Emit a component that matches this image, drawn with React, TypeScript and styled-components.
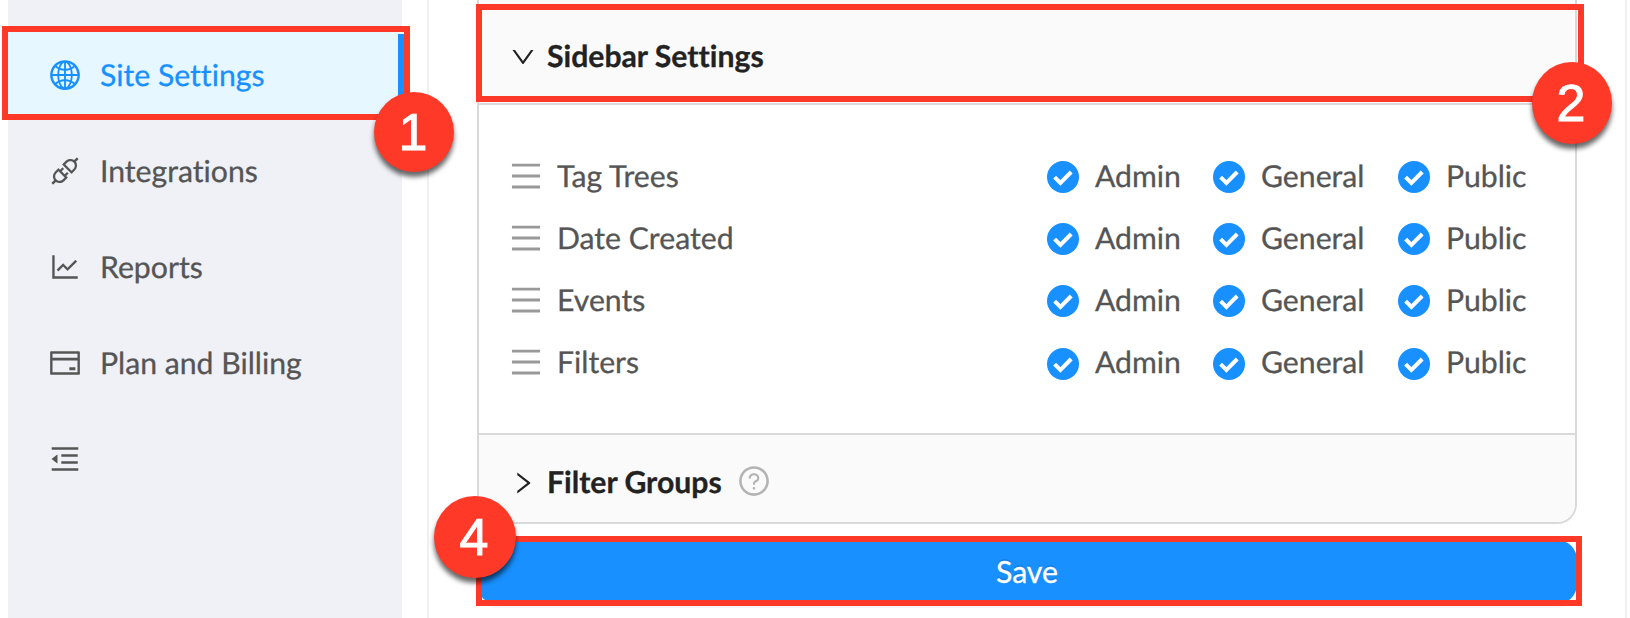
import React from "react";
import styled, { createGlobalStyle } from "styled-components";
import {
  AiOutlineGlobal,
  AiOutlineApi,
  AiOutlineLineChart,
  AiOutlineCreditCard,
  AiOutlineMenuFold,
  AiOutlineMenu,
  AiOutlineDown,
  AiOutlineRight,
  AiOutlineQuestionCircle,
} from "react-icons/ai";

const GlobalStyle = createGlobalStyle`
  * { box-sizing: border-box; }
  body {
    margin: 0;
    background: #fff;
    font-family: Lato, "Liberation Sans", sans-serif;
    font-size: 30.2px;
    font-variant-ligatures: none;
    text-rendering: geometricPrecision;
    -webkit-text-stroke: 0.3px currentColor;
    overflow: hidden;
  }
`;

const Page = styled.div`
  position: relative;
  display: flex;
  width: 1630px;
  height: 618px;
  padding-left: 8px;
  overflow: hidden;
`;

const Sidebar = styled.nav`
  width: 394px;
  height: 100%;
  padding-top: 32px;
  display: flex;
  flex-direction: column;
  gap: 14px;
  background: #f0f1f6;
`;

const NavItem = styled.a<{ $active?: boolean }>`
  display: flex;
  align-items: center;
  gap: 18px;
  height: 82px;
  padding: 4px 0 0 40px;
  line-height: 40px;
  color: ${(p) => (p.$active ? "#1890ff" : "#555")};
  background: ${(p) => (p.$active ? "#e6f7ff" : "transparent")};
  svg { flex: none; width: 34px; height: 34px; }
`;

const Label = styled.span<{ $lift: number }>`
  margin-bottom: ${(p) => p.$lift * 2}px;
`;

const Main = styled.main`
  width: 1200px;
  height: 100%;
  margin-left: 25px;
  padding: 0 48px;
  border: solid #f0f0f0;
  border-width: 0 2px;
`;

const Collapse = styled.section`
  height: 524px;
  border: 2px solid #d9d9d9;
  border-top: 0;
  border-radius: 0 0 20px 20px;
  overflow: hidden;
`;

const PanelHeader = styled.header<{ $height: number; $offset: number }>`
  display: flex;
  align-items: center;
  height: ${(p) => p.$height}px;
  padding: ${(p) => p.$offset}px 0 0 30px;
  background: #fafafa;
  color: #222;
  font-weight: 700;
  line-height: 40px;
`;

const Arrow = styled.span`
  display: flex;
  width: 28px;
  margin: 2px 10px 0 0;
  svg { width: 28px; height: 28px; }
`;

const Help = styled.span`
  display: flex;
  margin: 0 0 2px 15px;
  color: #b3b3b3;
  svg { width: 34px; height: 34px; }
`;

const PanelBody = styled.div`
  height: 332px;
  padding: 41px 47px 0 29px;
  border: solid #d9d9d9;
  border-width: 2px 0;
`;

const SettingRow = styled.div`
  display: flex;
  align-items: center;
  height: 62.2px;
  color: #555;
  line-height: 40px;
`;

const Handle = styled.span`
  display: flex;
  margin: 0 13px 3px 0;
  color: #999;
  svg { width: 36px; height: 36px; }
`;

const Options = styled.div`
  display: grid;
  grid-template-columns: 166px 185px 130px;
  margin-left: auto;
`;

const Option = styled.label`
  display: flex;
  align-items: center;
  gap: 16px;
  svg { flex: none; width: 32px; height: 32px; }
`;

const SaveButton = styled.button`
  display: block;
  width: 100%;
  height: 64px;
  margin-top: 16px;
  padding: 0 0 2px;
  border: 0;
  border-radius: 20px;
  background: #1890ff;
  box-shadow: 0 4px 0 rgba(0, 0, 0, 0.04);
  color: #fff;
  font: 400 30.2px/40px Lato, "Liberation Sans", sans-serif;
  text-shadow: 0 -2px 0 rgba(0, 0, 0, 0.12);
`;

const Outline = styled.div<{ $x: number; $y: number; $w: number; $h: number }>`
  position: absolute;
  left: ${(p) => p.$x}px;
  top: ${(p) => p.$y}px;
  width: ${(p) => p.$w}px;
  height: ${(p) => p.$h}px;
  border: 6px solid #ff3928;
`;

const ActiveBar = styled.div`
  position: absolute;
  left: 398px;
  top: 32px;
  width: 6px;
  height: 82px;
  background: #1890ff;
  border-top: 2px solid #f4fbff;
`;

const Badge = styled.div<{ $x: number; $y: number; $w: number; $h: number }>`
  position: absolute;
  left: ${(p) => p.$x}px;
  top: ${(p) => p.$y}px;
  width: ${(p) => p.$w}px;
  height: ${(p) => p.$h}px;
  display: flex;
  align-items: center;
  justify-content: center;
  padding: 2px 2px 0 0;
  border-radius: 50%;
  background: #ff3928;
  box-shadow: 0 5px 5px rgba(0, 0, 0, 0.6);
  color: #fff;
  font: 400 52px/60px "Liberation Sans", Arial, sans-serif;
  -webkit-text-stroke: 1px #fff;
`;

const CheckMark = () => (
  <svg viewBox="0 0 32 32">
    <circle cx="16" cy="16" r="16" fill="#1890ff" />
    <path d="M7.6 16.2 13.4 22 24.2 11" fill="none" stroke="#fff" strokeWidth="4" />
  </svg>
);

const settings = ["Tag Trees", "Date Created", "Events", "Filters"];
const roles = ["Admin", "General", "Public"];

export default function App() {
  return (
    <Page>
      <GlobalStyle />
      <Sidebar>
        <NavItem $active><AiOutlineGlobal /><Label $lift={0.5}>Site Settings</Label></NavItem>
        <NavItem><AiOutlineApi /><Label $lift={0.5}>Integrations</Label></NavItem>
        <NavItem><AiOutlineLineChart /><Label $lift={0.5}>Reports</Label></NavItem>
        <NavItem><AiOutlineCreditCard /><Label $lift={0.5}>Plan and Billing</Label></NavItem>
        <NavItem><AiOutlineMenuFold /></NavItem>
      </Sidebar>
      <Main>
        <Collapse>
          <PanelHeader $height={103} $offset={9}>
            <Arrow><AiOutlineDown /></Arrow>Sidebar Settings
          </PanelHeader>
          <PanelBody>
            {settings.map((name) => (
              <SettingRow key={name}>
                <Handle><AiOutlineMenu /></Handle>
                <Label $lift={1.5}>{name}</Label>
                <Options>
                  {roles.map((role) => (
                    <Option key={role}><CheckMark /><Label $lift={1.5}>{role}</Label></Option>
                  ))}
                </Options>
              </SettingRow>
            ))}
          </PanelBody>
          <PanelHeader $height={87} $offset={7}>
            <Arrow><AiOutlineRight /></Arrow>Filter Groups
            <Help><AiOutlineQuestionCircle /></Help>
          </PanelHeader>
        </Collapse>
        <SaveButton>Save</SaveButton>
      </Main>
      <ActiveBar />
      <Outline $x={2} $y={26} $w={408} $h={94} />
      <Outline $x={476} $y={4} $w={1108} $h={98} />
      <Outline $x={476} $y={536} $w={1106} $h={70} />
      <Badge $x={374} $y={92} $w={80} $h={80}>1</Badge>
      <Badge $x={1532} $y={62} $w={80} $h={82}>2</Badge>
      <Badge $x={434} $y={496} $w={82} $h={82}>4</Badge>
    </Page>
  );
}
